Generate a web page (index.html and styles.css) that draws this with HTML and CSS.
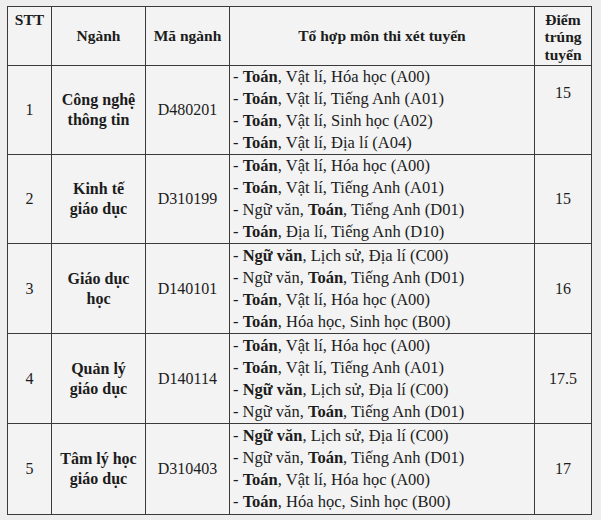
FILE: index.html
```html
<!DOCTYPE html>
<html lang="vi">
<head>
<meta charset="utf-8">
<title>Điểm trúng tuyển</title>
<link rel="stylesheet" href="styles.css">
</head>
<body>
<table class="scores">
  <colgroup>
    <col class="c-stt">
    <col class="c-nganh">
    <col class="c-ma">
    <col class="c-tohop">
    <col class="c-diem">
  </colgroup>
  <thead>
    <tr class="head-row">
      <th class="stt-head">STT</th>
      <th>Ngành</th>
      <th>Mã ngành</th>
      <th>Tổ hợp môn thi xét tuyển</th>
      <th class="diem-head">Điểm<br>trúng<br>tuyển</th>
    </tr>
  </thead>
  <tbody>
    <tr class="r1">
      <td class="num">1</td>
      <td class="name">Công nghệ<br>thông tin</td>
      <td class="code">D480201</td>
      <td class="combo">
        <div>- <b>Toán</b>, Vật lí, Hóa học (A00)</div>
        <div>- <b>Toán</b>, Vật lí, Tiếng Anh (A01)</div>
        <div>- <b>Toán</b>, Vật lí, Sinh học (A02)</div>
        <div>- <b>Toán</b>, Vật lí, Địa lí (A04)</div>
      </td>
      <td class="score score-high">15</td>
    </tr>
    <tr class="r2">
      <td class="num">2</td>
      <td class="name">Kinh tế<br>giáo dục</td>
      <td class="code">D310199</td>
      <td class="combo">
        <div>- <b>Toán</b>, Vật lí, Hóa học (A00)</div>
        <div>- <b>Toán</b>, Vật lí, Tiếng Anh (A01)</div>
        <div>- Ngữ văn, <b>Toán</b>, Tiếng Anh (D01)</div>
        <div>- <b>Toán</b>, Địa lí, Tiếng Anh (D10)</div>
      </td>
      <td class="score">15</td>
    </tr>
    <tr class="r3">
      <td class="num">3</td>
      <td class="name">Giáo dục<br>học</td>
      <td class="code">D140101</td>
      <td class="combo">
        <div>- <b>Ngữ văn</b>, Lịch sử, Địa lí (C00)</div>
        <div>- Ngữ văn, <b>Toán</b>, Tiếng Anh (D01)</div>
        <div>- <b>Toán</b>, Vật lí, Hóa học (A00)</div>
        <div>- <b>Toán</b>, Hóa học, Sinh học (B00)</div>
      </td>
      <td class="score">16</td>
    </tr>
    <tr class="r4">
      <td class="num">4</td>
      <td class="name">Quản lý<br>giáo dục</td>
      <td class="code">D140114</td>
      <td class="combo">
        <div>- <b>Toán</b>, Vật lí, Hóa học (A00)</div>
        <div>- <b>Toán</b>, Vật lí, Tiếng Anh (A01)</div>
        <div>- <b>Ngữ văn</b>, Lịch sử, Địa lí (C00)</div>
        <div>- Ngữ văn, <b>Toán</b>, Tiếng Anh (D01)</div>
      </td>
      <td class="score">17.5</td>
    </tr>
    <tr class="r5">
      <td class="num">5</td>
      <td class="name">Tâm lý học<br>giáo dục</td>
      <td class="code">D310403</td>
      <td class="combo">
        <div>- <b>Ngữ văn</b>, Lịch sử, Địa lí (C00)</div>
        <div>- Ngữ văn, <b>Toán</b>, Tiếng Anh (D01)</div>
        <div>- <b>Toán</b>, Vật lí, Hóa học (A00)</div>
        <div>- <b>Toán</b>, Hóa học, Sinh học (B00)</div>
      </td>
      <td class="score">17</td>
    </tr>
  </tbody>
</table>
</body>
</html>
```

FILE: styles.css
```css
html, body {
  background: #eeeeee;
}
body {
  margin: 6px 0 0 7px;
  font-family: "Liberation Serif", "Times New Roman", serif;
  font-size: 16px;
  color: #1c1c1c;
}
.scores {
  border-collapse: collapse;
  width: 584px;
  table-layout: fixed;
  background: #f3f3f3;
  border: 1.5px solid #2a2a2a;
}
.c-stt { width: 44px; }
.c-nganh { width: 94px; }
.c-ma { width: 84px; }
.c-tohop { width: 305px; }
.c-diem { width: 57px; }

.scores th,
.scores td {
  border: 1px solid #3a3a3a;
  padding: 0;
}
.scores th {
  font-size: 15.5px;
  font-weight: bold;
  text-align: center;
  vertical-align: middle;
  line-height: 17.5px;
}
.head-row { height: 59px; }
.scores th.stt-head {
  vertical-align: top;
  padding-top: 4px;
}
.scores th.diem-head {
  padding-top: 2px;
}
.r1 { height: 87px; }
.r2 { height: 89px; }
.r3 { height: 90px; }
.r4 { height: 90px; }
.r5 { height: 91px; }

.scores td {
  vertical-align: middle;
}
.num,
.code,
.score {
  text-align: center;
}
.scores td.score-high { padding-bottom: 34px; }
.name {
  text-align: center;
  font-weight: bold;
  line-height: 20px;
}
.scores td.combo {
  font-size: 16.5px;
  line-height: 22px;
  padding-left: 3px;
}
.combo b { font-weight: bold; }
```
